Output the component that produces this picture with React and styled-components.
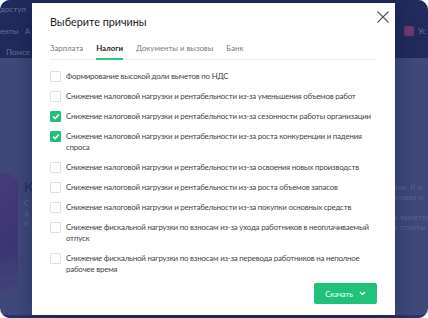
import React from 'react';
import styled, { createGlobalStyle } from 'styled-components';

const GlobalStyle = createGlobalStyle`
  html, body {
    margin: 0;
    padding: 0;
    background: #ffffff;
  }
  body {
    font-family: Lato, 'Liberation Sans', sans-serif;
  }
`;

const Frame = styled.div`
  position: relative;
  width: 428px;
  height: 318px;
  overflow: hidden;
  border-radius: 10px;
  background: #3e4879;
  display: flex;
  flex-direction: column;
`;

const TopBand = styled.div`
  height: 58px;
  background: #212a5c;
  display: flex;
  flex-direction: column;
  gap: 10px;
  padding: 3px 0 0 0;
  box-sizing: border-box;
  color: #6a7196;
  font-size: 8px;
`;

const BandRow = styled.div`
  display: flex;
  justify-content: space-between;
  align-items: center;
  padding-left: ${({ indent }) => indent || 0}px;
  height: 12px;
`;

const BandTail = styled.div`
  display: flex;
  align-items: center;
  gap: 4px;
  padding-right: 2px;
`;

const FadedIcon = styled.div`
  width: 10px;
  height: 10px;
  border-radius: 2px;
  background: #6a3a6e;
`;

const PageBody = styled.div`
  flex: 1;
  display: flex;
  justify-content: space-between;
  padding: 124px 0 0 0;
  color: #5a6290;
  font-size: 8px;
  line-height: 10px;
  border-bottom: 3px solid #2a3263;
`;

const LeftCol = styled.div`
  display: flex;
  gap: 6px;
`;

const Blob = styled.div`
  width: 18px;
  height: 120px;
  margin-top: -8px;
  background: linear-gradient(160deg, #47397a 0%, #3b3573 60%, #454679 100%);
  border-radius: 0 12px 10px 0;
`;

const FadedText = styled.div`
  display: flex;
  flex-direction: column;
  gap: ${({ gap }) => gap || 0}px;
`;

const FadedHeading = styled.div`
  color: #2a326a;
  font-weight: 700;
  font-size: 13px;
  margin-bottom: 6px;
`;

const Dialog = styled.div`
  position: absolute;
  left: 32px;
  top: 3px;
  width: 363px;
  height: 312px;
  background: #ffffff;
  box-shadow: 0 4px 16px rgba(10, 14, 40, 0.35);
  padding: 11px 18px 0 18px;
  box-sizing: border-box;
  display: flex;
  flex-direction: column;
`;

const CloseButton = styled.button`
  position: absolute;
  top: 8px;
  right: 6px;
  width: 12px;
  height: 12px;
  padding: 0;
  border: none;
  background: none;
  cursor: pointer;
  display: flex;
`;

const Title = styled.h2`
  margin: 0;
  font-size: 10.8px;
  line-height: 16px;
  font-weight: 400;
  color: #222;
`;

const Tabs = styled.div`
  display: flex;
  gap: 13px;
  margin-top: 12px;
  border-bottom: 1px solid #eeeeee;
`;

const Tab = styled.div`
  font-size: 7.8px;
  line-height: 12px;
  padding-bottom: 4px;
  color: ${({ active }) => (active ? '#222' : '#7a7a7a')};
  font-weight: ${({ active }) => (active ? 700 : 400)};
  border-bottom: 2px solid ${({ active }) => (active ? '#2ac483' : 'transparent')};
  margin-bottom: -1px;
`;

const List = styled.div`
  display: flex;
  flex-direction: column;
  gap: 9px;
  margin-top: 11px;
`;

const Item = styled.label`
  display: flex;
  gap: 5px;
  align-items: flex-start;
  font-size: 7.9px;
  letter-spacing: -0.2px;
  line-height: 11px;
  color: #444;
`;

const Box = styled.span`
  flex: none;
  width: 11px;
  height: 11px;
  box-sizing: border-box;
  border-radius: 1px;
  border: 1px solid ${({ checked }) => (checked ? '#1ebf77' : '#e0e0e0')};
  background: ${({ checked }) => (checked ? '#1ebf77' : '#fff')};
  display: flex;
  align-items: center;
  justify-content: center;
`;

const Footer = styled.div`
  display: flex;
  justify-content: flex-end;
  margin-top: auto;
  padding-bottom: 11px;
`;

const DownloadButton = styled.button`
  display: flex;
  align-items: center;
  gap: 6px;
  height: 21px;
  padding: 0 11px 0 11px;
  border: none;
  border-radius: 2px;
  background: #1ec27a;
  color: #fff;
  font-family: inherit;
  font-size: 7.6px;
`;

const reasons = [
  { text: 'Формирование высокой доли вычетов по НДС' },
  { text: 'Снижение налоговой нагрузки и рентабельности из-за уменьшения объемов работ' },
  { text: 'Снижение налоговой нагрузки и рентабельности из-за сезонности работы организации', checked: true },
  { text: 'Снижение налоговой нагрузки и рентабельности из-за роста конкуренции и падения спроса', checked: true },
  { text: 'Снижение налоговой нагрузки и рентабельности из-за освоения новых производств' },
  { text: 'Снижение налоговой нагрузки и рентабельности из-за роста объемов запасов' },
  { text: 'Снижение налоговой нагрузки и рентабельности из-за покупки основных средств' },
  { text: 'Снижение фискальной нагрузки по взносам из-за ухода работников в неоплачиваемый отпуск' },
  { text: 'Снижение фискальной нагрузки по взносам из-за перевода работников на неполное рабочее время' },
];

const tabs = ['Зарплата', 'Налоги', 'Документы и вызовы', 'Банк'];

const Check = () => (
  <svg width="8" height="7" viewBox="0 0 8 7">
    <path d="M1 3.6 L3.1 5.6 L7 1.4" fill="none" stroke="#fff" strokeWidth="1.6" />
  </svg>
);

const App = () => (
  <>
    <GlobalStyle />
    <Frame>
      <TopBand>
        <BandRow>доступ</BandRow>
        <BandRow>
          <span>енты &nbsp;&nbsp;А</span>
          <BandTail>
            <FadedIcon />
            <span>Ус</span>
          </BandTail>
        </BandRow>
        <BandRow indent={6}>Помсе</BandRow>
      </TopBand>
      <PageBody>
        <LeftCol>
          <Blob />
          <FadedText>
            <FadedHeading>К</FadedHeading>
            <span>С</span>
            <span>ф</span>
            <span>п</span>
          </FadedText>
        </LeftCol>
        <FadedText gap={0}>
          <span>ские. К н</span>
          <span>екторы и</span>
          <span>&nbsp;</span>
          <span>ль вычеты</span>
          <span>се отчеты</span>
        </FadedText>
      </PageBody>

      <Dialog>
        <CloseButton aria-label="Закрыть">
          <svg width="12" height="12" viewBox="0 0 12 12">
            <path d="M0.5 0.5 L11.5 11.5 M11.5 0.5 L0.5 11.5" stroke="#555" strokeWidth="1.1" />
          </svg>
        </CloseButton>
        <Title>Выберите причины</Title>
        <Tabs>
          {tabs.map(t => (
            <Tab key={t} active={t === 'Налоги'}>
              {t}
            </Tab>
          ))}
        </Tabs>
        <List>
          {reasons.map(r => (
            <Item key={r.text}>
              <Box checked={r.checked}>{r.checked && <Check />}</Box>
              <span>{r.text}</span>
            </Item>
          ))}
        </List>
        <Footer>
          <DownloadButton>
            Скачать
            <svg width="7" height="5" viewBox="0 0 7 5">
              <path d="M1 1 L3.5 3.5 L6 1" fill="none" stroke="#fff" strokeWidth="1.4" />
            </svg>
          </DownloadButton>
        </Footer>
      </Dialog>
    </Frame>
  </>
);

export default App;
